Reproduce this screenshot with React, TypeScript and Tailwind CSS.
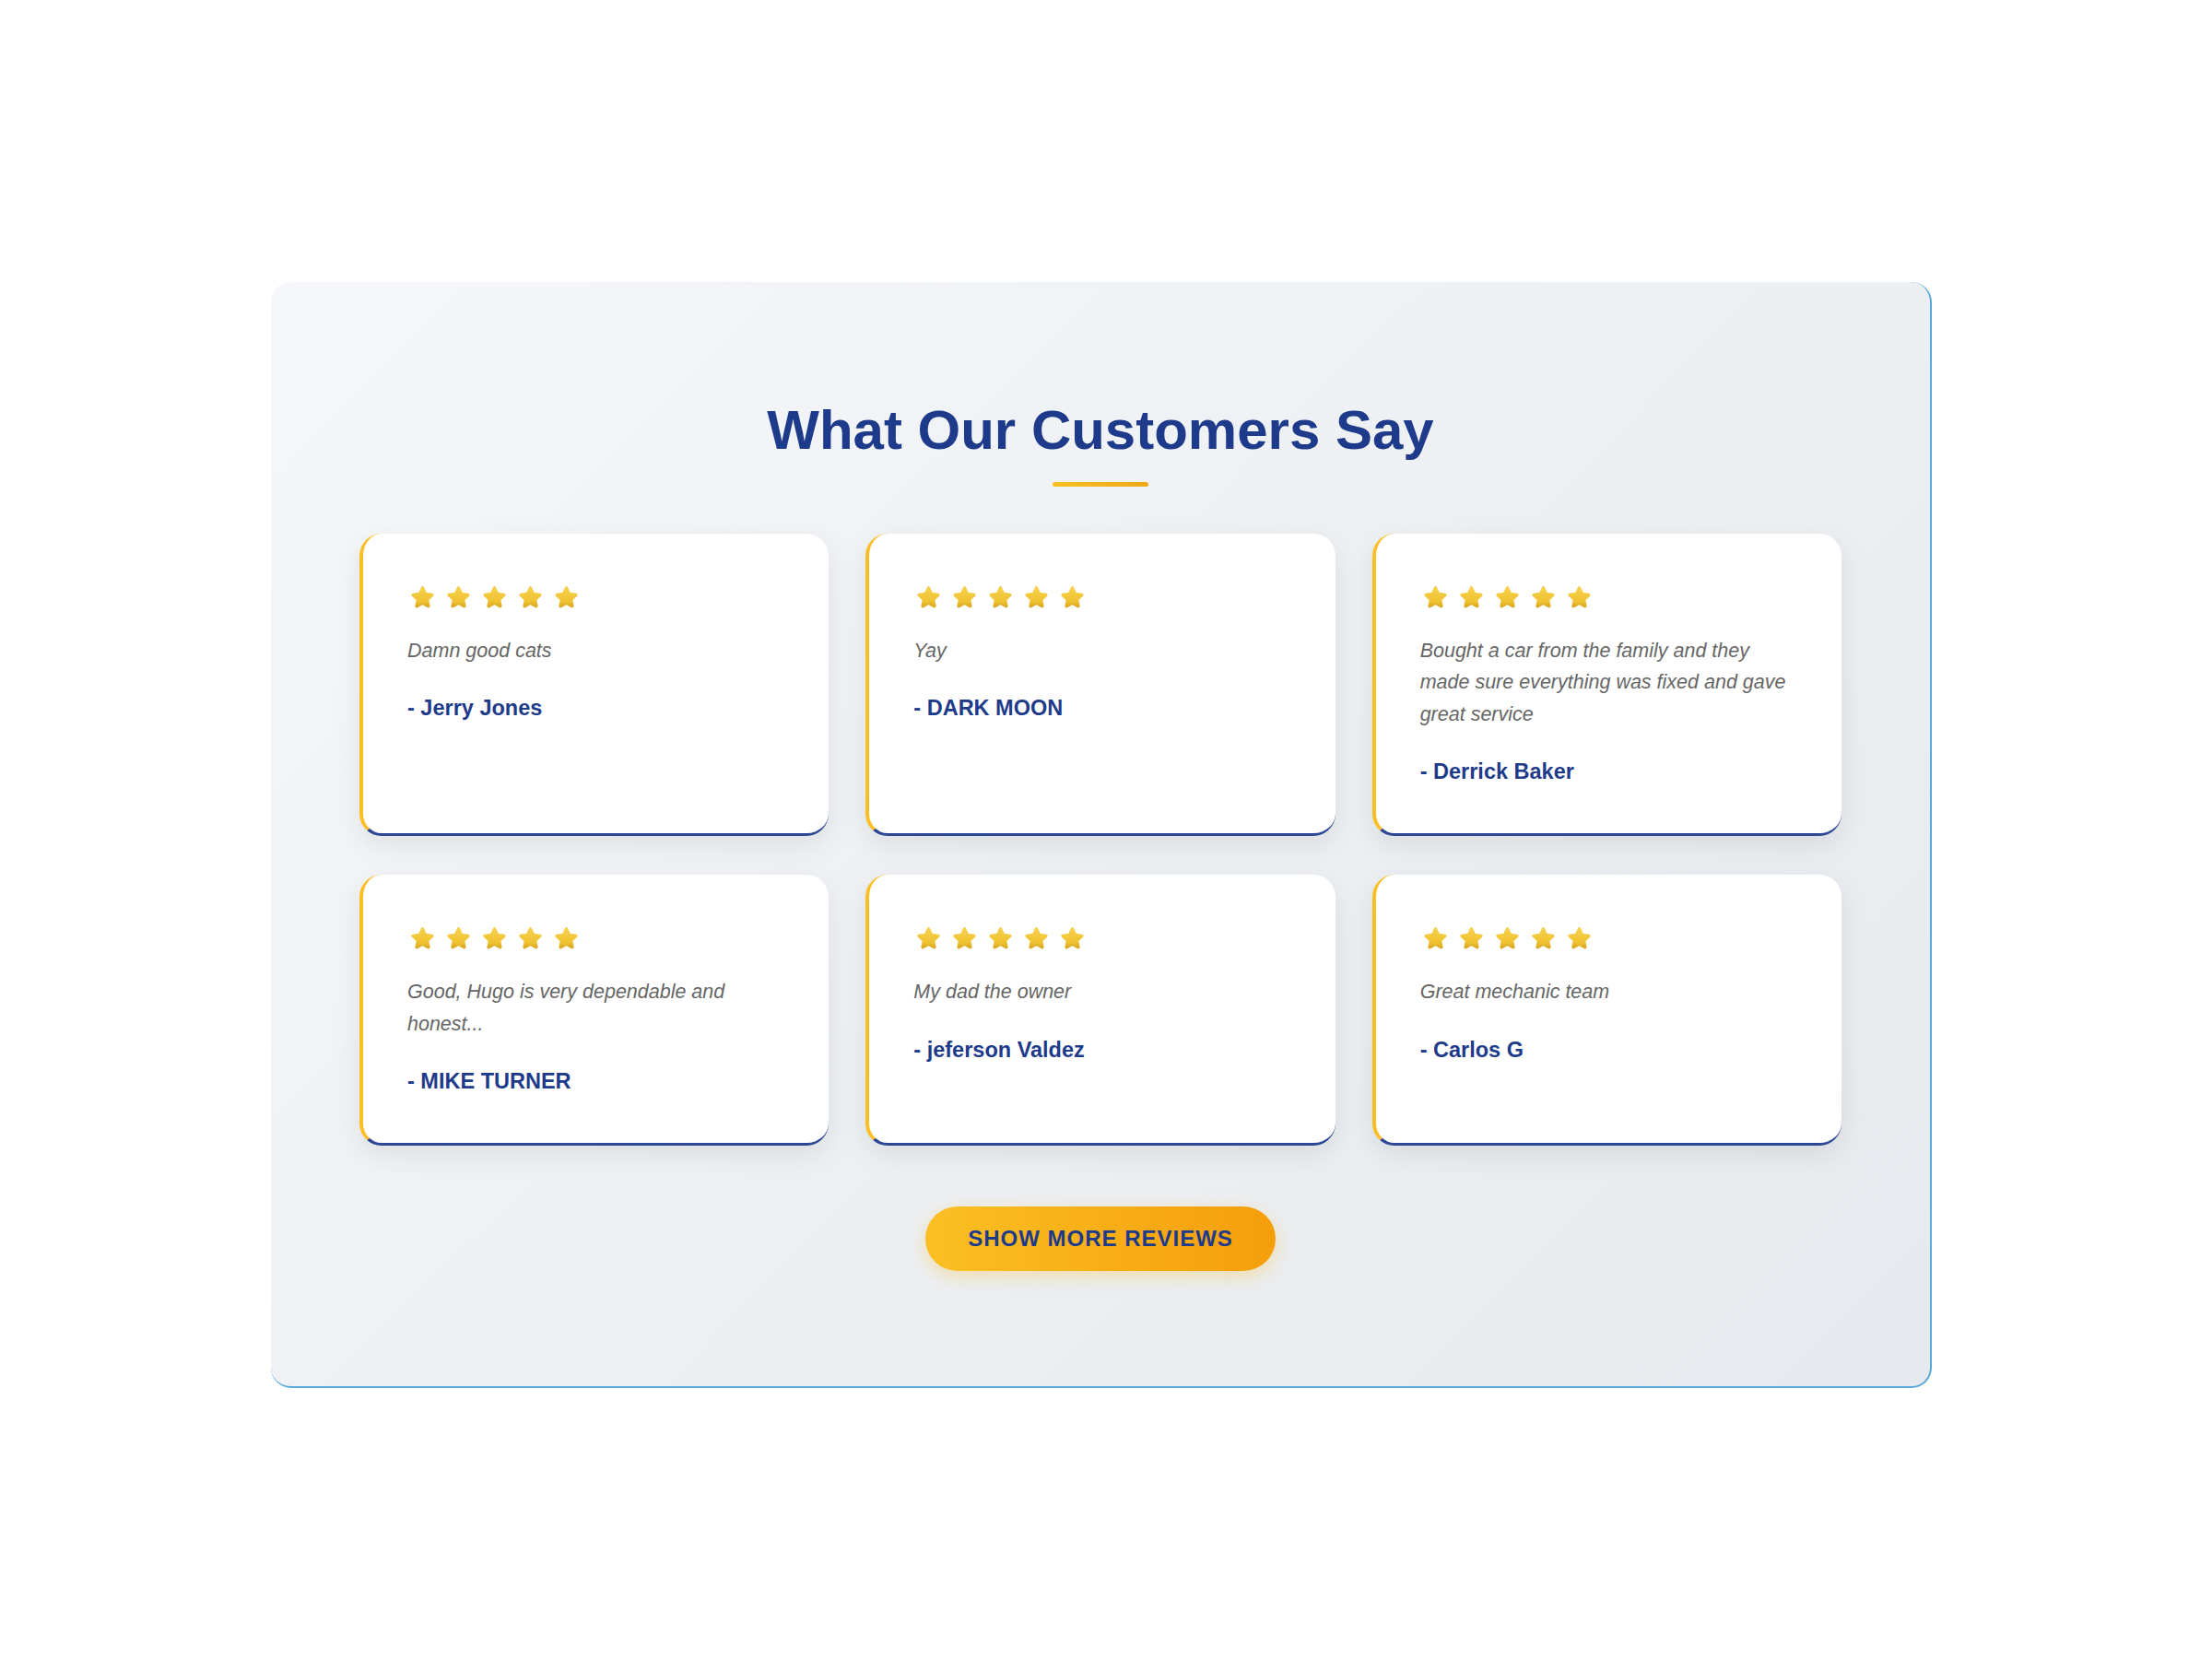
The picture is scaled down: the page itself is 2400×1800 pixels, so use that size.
import React, { useId } from 'react';

const reviews = [
  { text: 'Damn good cats', author: 'Jerry Jones' },
  { text: 'Yay', author: 'DARK MOON' },
  { text: 'Bought a car from the family and they made sure everything was fixed and gave great service', author: 'Derrick Baker' },
  { text: 'Good, Hugo is very dependable and honest...', author: 'MIKE TURNER' },
  { text: 'My dad the owner', author: 'jeferson Valdez' },
  { text: 'Great mechanic team', author: 'Carlos G' },
];

const Star = () => {
  const id = useId();
  return (
    <svg viewBox="0 0 24 24" className="h-[29px] w-[29px]">
      <defs>
        <linearGradient id={id} x1="0" y1="0" x2="0" y2="1">
          <stop offset="0%" stopColor="#f6d04a" />
          <stop offset="75%" stopColor="#efc232" />
          <stop offset="100%" stopColor="#dcaa22" />
        </linearGradient>
      </defs>
      <path
        d="M12 3.2l2.6 5.5 6 .8-4.4 4.2 1.1 5.9L12 16.7l-5.3 2.9 1.1-5.9-4.4-4.2 6-.8z"
        fill={`url(#${id})`}
        stroke={`url(#${id})`}
        strokeWidth="2.8"
        strokeLinejoin="round"
      />
    </svg>
  );
};

const ReviewCard = ({ text, author }: { text: string; author: string }) => (
  <div className="rounded-[24px] border-l-4 border-b-[3px] border-l-[#fbbf24] border-b-[#2c4894] bg-white px-12 pt-12 pb-[49px] shadow-[0_10px_30px_rgba(0,0,0,0.08)]">
    <div className="mb-5 ml-[2px] flex h-[42px] items-center gap-[10px]">
      {[0, 1, 2, 3, 4].map((i) => (
        <Star key={i} />
      ))}
    </div>
    <p className="text-[21.5px] leading-[1.6] italic text-[#666666]">{text}</p>
    <p className="mt-[28px] text-[23.5px] leading-[35px] font-bold text-[#1e3a8a]">- {author}</p>
  </div>
);

export default function App() {
  return (
    <div className="min-h-screen bg-white pt-[306px] pl-[294px] font-['Liberation_Sans',Arial,sans-serif]">
      <section className="w-[1802px] rounded-[22px] border-r-2 border-b-2 border-[#56a9d9] bg-[linear-gradient(135deg,#f5f7fa_0%,#e6e9ed_100%)] px-[96px] pt-[125px] pb-[125px]">
        <h2 className="text-center text-[60px] leading-[72px] font-bold text-[#1e3a8a]">What Our Customers Say</h2>
        <div className="mx-auto mt-[20px] h-[5px] w-[104px] rounded-full bg-[linear-gradient(90deg,#fbbf24,#f0a818)]" />

        <div className="mt-[51px] grid grid-cols-3 gap-x-10 gap-y-[42px]">
          {reviews.map((r) => (
            <ReviewCard key={r.author} text={r.text} author={r.author} />
          ))}
        </div>

        <div className="mt-[66px] flex justify-center">
          <button className="h-[70px] rounded-full bg-[linear-gradient(90deg,#fbbf24,#f59e0b)] px-[46px] text-[24px] font-bold tracking-[1px] text-[#1e3a8a] shadow-[0_6px_20px_rgba(251,191,36,0.35)]">
            SHOW MORE REVIEWS
          </button>
        </div>
      </section>
    </div>
  );
}
